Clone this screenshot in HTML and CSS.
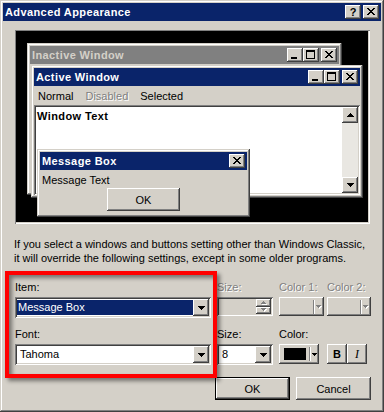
FILE: index.html
```html
<!DOCTYPE html>
<html lang="en">
<head>
  <meta charset="UTF-8" />
  <title>Advanced Appearance</title>
  <link rel="stylesheet" href="styles.css">
</head>
<body>
  <div class="dialog">
    <div class="caption">
      <span class="caption-title">Advanced Appearance</span>
      <div class="caption-btns">
        <span class="cap-btn cap-help">?</span>
        <span class="cap-btn">
          <svg width="16" height="14" shape-rendering="crispEdges"><path transform="translate(4 3)" d="M0 0h2v1h-2zM6 0h2v1h-2zM1 1h2v1h-2zM5 1h2v1h-2zM2 2h4v1h-4zM3 3h2v1h-2zM2 4h4v1h-4zM1 5h2v1h-2zM5 5h2v1h-2zM0 6h2v1h-2zM6 6h2v1h-2z"/></svg>
        </span>
      </div>
    </div>

    <div class="dlg-body">
      <!-- preview canvas: the sample windows overlap each other -->
      <div class="preview">
        <div class="win win-inactive">
          <div class="win-caption inactive">
            <span class="win-title">Inactive Window</span>
            <div class="mini-btns">
              <span class="cap-btn"><svg width="16" height="14" shape-rendering="crispEdges"><path d="M4 9h6v2h-6z"/></svg></span>
              <span class="cap-btn"><svg width="16" height="14" shape-rendering="crispEdges"><path fill-rule="evenodd" d="M3 2h9v9h-9zM4 4v6h7v-6z"/></svg></span>
              <span class="cap-btn cap-close"><svg width="16" height="14" shape-rendering="crispEdges"><path transform="translate(4 3)" d="M0 0h2v1h-2zM6 0h2v1h-2zM1 1h2v1h-2zM5 1h2v1h-2zM2 2h4v1h-4zM3 3h2v1h-2zM2 4h4v1h-4zM1 5h2v1h-2zM5 5h2v1h-2zM0 6h2v1h-2zM6 6h2v1h-2z"/></svg></span>
            </div>
          </div>
        </div>

        <div class="win win-active">
          <div class="win-caption">
            <span class="win-title">Active Window</span>
            <div class="mini-btns">
              <span class="cap-btn"><svg width="16" height="14" shape-rendering="crispEdges"><path d="M4 9h6v2h-6z"/></svg></span>
              <span class="cap-btn"><svg width="16" height="14" shape-rendering="crispEdges"><path fill-rule="evenodd" d="M3 2h9v9h-9zM4 4v6h7v-6z"/></svg></span>
              <span class="cap-btn cap-close"><svg width="16" height="14" shape-rendering="crispEdges"><path transform="translate(4 3)" d="M0 0h2v1h-2zM6 0h2v1h-2zM1 1h2v1h-2zM5 1h2v1h-2zM2 2h4v1h-4zM3 3h2v1h-2zM2 4h4v1h-4zM1 5h2v1h-2zM5 5h2v1h-2zM0 6h2v1h-2zM6 6h2v1h-2z"/></svg></span>
            </div>
          </div>
          <div class="menubar">
            <span>Normal</span>
            <span class="disabled">Disabled</span>
            <span>Selected</span>
          </div>
          <div class="win-text">
            <div class="win-text-body">Window Text</div>
            <div class="scroll">
              <span class="scroll-btn btn"><svg width="7" height="4" shape-rendering="crispEdges"><path d="M3 0h1v1h1v1h1v1h1v1h-7v-1h1v-1h1v-1h1z"/></svg></span>
              <span class="scroll-btn btn"><svg width="7" height="4" shape-rendering="crispEdges"><path d="M0 0h7v1h-1v1h-1v1h-1v1h-1v-1h-1v-1h-1v-1h-1z"/></svg></span>
            </div>
          </div>
        </div>

        <div class="win win-msg">
          <div class="win-caption">
            <span class="win-title">Message Box</span>
            <div class="mini-btns">
              <span class="cap-btn"><svg width="16" height="14" shape-rendering="crispEdges"><path transform="translate(4 3)" d="M0 0h2v1h-2zM6 0h2v1h-2zM1 1h2v1h-2zM5 1h2v1h-2zM2 2h4v1h-4zM3 3h2v1h-2zM2 4h4v1h-4zM1 5h2v1h-2zM5 5h2v1h-2zM0 6h2v1h-2zM6 6h2v1h-2z"/></svg></span>
            </div>
          </div>
          <div class="msg-body">
            <span class="msg-text">Message Text</span>
            <span class="btn msg-ok">OK</span>
          </div>
        </div>
      </div>

      <p class="note">If you select a windows and buttons setting other than Windows Classic,<br>it will override the following settings, except in some older programs.</p>

      <div class="settings">
        <div class="field">
          <label>Item:</label>
          <div class="combo combo-wide">
            <span class="combo-text sel">Message Box</span>
            <span class="combo-btn btn"><svg width="7" height="4" shape-rendering="crispEdges"><path d="M0 0h7v1h-1v1h-1v1h-1v1h-1v-1h-1v-1h-1v-1h-1z"/></svg></span>
          </div>
        </div>
        <div class="field disabled">
          <label>Size:</label>
          <div class="spin">
            <span class="spin-field"></span>
            <span class="spin-btns">
              <span class="btn"><svg width="6" height="4" shape-rendering="crispEdges"><path fill="#fff" transform="translate(1 1)" d="M2 0h1v1h1v1h1v1h-5v-1h1v-1h1z"/><path fill="#808080" d="M2 0h1v1h1v1h1v1h-5v-1h1v-1h1z"/></svg></span>
              <span class="btn"><svg width="6" height="4" shape-rendering="crispEdges"><path fill="#fff" transform="translate(1 1)" d="M0 0h5v1h-1v1h-1v1h-1v-1h-1v-1h-1z"/><path fill="#808080" d="M0 0h5v1h-1v1h-1v1h-1v-1h-1v-1h-1z"/></svg></span>
            </span>
          </div>
        </div>
        <div class="field disabled">
          <label>Color 1:</label>
          <div class="picker btn picker-c1">
            <span class="swatch"></span>
            <span class="sep"></span>
            <svg width="6" height="4" shape-rendering="crispEdges"><path fill="#fff" transform="translate(1 1)" d="M0 0h5v1h-1v1h-1v1h-1v-1h-1v-1h-1z"/><path fill="#808080" d="M0 0h5v1h-1v1h-1v1h-1v-1h-1v-1h-1z"/></svg>
          </div>
        </div>
        <div class="field disabled">
          <label>Color 2:</label>
          <div class="picker btn picker-c2">
            <span class="swatch"></span>
            <span class="sep"></span>
            <svg width="6" height="4" shape-rendering="crispEdges"><path fill="#fff" transform="translate(1 1)" d="M0 0h5v1h-1v1h-1v1h-1v-1h-1v-1h-1z"/><path fill="#808080" d="M0 0h5v1h-1v1h-1v1h-1v-1h-1v-1h-1z"/></svg>
          </div>
        </div>

        <div class="field">
          <label>Font:</label>
          <div class="combo combo-wide">
            <span class="combo-text">Tahoma</span>
            <span class="combo-btn btn"><svg width="7" height="4" shape-rendering="crispEdges"><path d="M0 0h7v1h-1v1h-1v1h-1v1h-1v-1h-1v-1h-1v-1h-1z"/></svg></span>
          </div>
        </div>
        <div class="field">
          <label>Size:</label>
          <div class="combo combo-size">
            <span class="combo-text">8</span>
            <span class="combo-btn btn"><svg width="7" height="4" shape-rendering="crispEdges"><path d="M0 0h7v1h-1v1h-1v1h-1v1h-1v-1h-1v-1h-1v-1h-1z"/></svg></span>
          </div>
        </div>
        <div class="field">
          <label>Color:</label>
          <div class="picker btn">
            <span class="swatch black"></span>
            <span class="sep"></span>
            <svg width="5" height="3" shape-rendering="crispEdges"><path d="M0 0h5v1h-1v1h-1v1h-1v-1h-1v-1h-1z"/></svg>
          </div>
        </div>
        <div class="field">
          <label>&nbsp;</label>
          <div class="style-btns">
            <span class="btn style-btn bold">B</span>
            <span class="btn style-btn italic">I</span>
          </div>
        </div>
      </div>

      <div class="actions">
        <span class="btn btn-default">OK</span>
        <span class="btn">Cancel</span>
      </div>
    </div>

    <div class="highlight"></div>
  </div>
</body>
</html>
```

FILE: styles.css
```css
* {
    margin: 0;
    padding: 0;
    box-sizing: border-box;
}
body {
    width: 384px;
    height: 412px;
    background: #d4d0c8;
    font-family: "Liberation Sans", Arial, sans-serif;
    font-size: 11px;
    color: #000;
}

/* ---- window frame ---- */
.dialog {
    position: relative;
    display: flex;
    flex-direction: column;
    width: 384px;
    height: 412px;
    padding: 3px;
    background: #d4d0c8;
    box-shadow: inset -1px -1px #404040, inset 1px 1px #d4d0c8, inset -2px -2px #808080, inset 2px 2px #fff;
}
.caption {
    display: flex;
    align-items: center;
    justify-content: space-between;
    height: 18px;
    padding: 0 2px;
    background: #0a246a;
    color: #fff;
    font-weight: bold;
    letter-spacing: 0.4px;
}
.caption-btns,
.mini-btns {
    display: flex;
    gap: 2px;
}
.mini-btns { gap: 0; }
.mini-btns .cap-close { margin-left: 2px; }
.cap-btn {
    display: flex;
    align-items: center;
    justify-content: center;
    width: 16px;
    height: 14px;
    background: #d4d0c8;
    color: #000;
    letter-spacing: 0;
    box-shadow: inset -1px -1px #404040, inset 1px 1px #fff, inset -2px -2px #808080, inset 2px 2px #d4d0c8;
}
.cap-help {
    font-size: 11px;
    font-weight: bold;
    line-height: 14px;
}

/* generic raised / sunken */
.btn {
    display: flex;
    align-items: center;
    justify-content: center;
    background: #d4d0c8;
    box-shadow: inset -1px -1px #404040, inset 1px 1px #fff, inset -2px -2px #808080, inset 2px 2px #d4d0c8;
}

.dlg-body {
    flex: 1;
    display: flex;
    flex-direction: column;
    padding: 9px 10px 0 12px;
}

/* ---- preview ---- */
.preview {
    position: relative;
    width: 355px;
    height: 194px;
    background: #000;
    box-shadow: inset 1px 1px #808080, inset -1px -1px #fff, inset -2px -2px #d4d0c8;
}
.win {
    position: absolute;
    display: flex;
    flex-direction: column;
    padding: 3px;
    background: #d4d0c8;
    box-shadow: inset -1px -1px #404040, inset 1px 1px #d4d0c8, inset -2px -2px #808080, inset 2px 2px #fff;
}
.win-inactive { left: 12px; top: 13px; width: 315px; height: 152px; }
.win-active { left: 16px; top: 35px; width: 332px; height: 133px; }
.win-msg { left: 22px; top: 119px; width: 213px; height: 68px; }

.win-caption {
    display: flex;
    align-items: center;
    height: 18px;
    padding: 0 2px;
    background: #0a246a;
    color: #fff;
    font-weight: bold;
    letter-spacing: 0.4px;
}
.win-caption.inactive {
    background: #808080;
    color: #d4d0c8;
}
.win-title { flex: 1; }

.menubar {
    display: flex;
    align-items: center;
    gap: 12px;
    height: 19px;
    padding-left: 4px;
}
.disabled,
.field.disabled label {
    color: #808080;
    text-shadow: 1px 1px #fff;
}

.win-text {
    flex: 1;
    display: flex;
    padding: 2px;
    background: #fff;
    box-shadow: inset 1px 1px #808080, inset -1px -1px #fff, inset 2px 2px #404040, inset -2px -2px #d4d0c8;
}
.win-text-body {
    flex: 1;
    padding: 3px 1px;
    font-weight: bold;
    letter-spacing: 0.4px;
    line-height: 13px;
}
.scroll {
    display: flex;
    flex-direction: column;
    justify-content: space-between;
    width: 16px;
    background: #e9e7e2;
}
.scroll-btn { height: 16px; }

.msg-body {
    display: flex;
    flex-direction: column;
    padding: 4px 2px 0;
}
.msg-text { line-height: 13px; }
.msg-ok {
    align-self: center;
    width: 73px;
    height: 23px;
    margin-top: 1px;
}

/* ---- note ---- */
.note {
    margin: 13px 0 0 -1px;
    line-height: 14px;
    white-space: nowrap;
}

/* ---- settings ---- */
.settings {
    display: grid;
    grid-template-columns: 202px 62px 48px 1fr;
    row-gap: 10px;
    margin-top: 16px;
}
.field {
    display: flex;
    flex-direction: column;
    align-items: flex-start;
    gap: 3px;
}
.field label { line-height: 13px; }

.combo {
    display: flex;
    height: 21px;
    padding: 2px;
    background: #fff;
    box-shadow: inset 1px 1px #808080, inset -1px -1px #fff, inset 2px 2px #404040, inset -2px -2px #d4d0c8;
}
.combo-wide { width: 196px; }
.combo-size { width: 56px; }
.combo-text {
    flex: 1;
    padding-left: 3px;
    line-height: 17px;
}
.combo-text.sel {
    margin: 1px 0;
    padding-left: 1px;
    line-height: 15px;
    background: #0a246a;
    color: #fff;
}
.combo-btn {
    width: 16px;
    height: 17px;
}

.spin {
    display: flex;
    width: 56px;
    height: 19px;
    padding: 2px;
    background: #d4d0c8;
    box-shadow: inset 1px 1px #808080, inset -1px -1px #fff, inset 2px 2px #404040, inset -2px -2px #d4d0c8;
}
.spin-field { flex: 1; }
.spin-btns {
    display: flex;
    flex-direction: column;
    width: 15px;
}
.spin-btns .btn { flex: 1; }

.picker {
    justify-content: flex-start;
    width: 40px;
    height: 20px;
    padding: 3px 2px 3px 5px;
}
.picker-c1 { width: 45px; height: 19px; }
.picker-c2 { width: 44px; height: 19px; }
.swatch {
    flex: 1;
    height: 12px;
    margin-right: 3px;
}
.swatch.black { background: #000; }
.sep {
    width: 2px;
    height: 14px;
    margin-right: 1px;
    border-left: 1px solid #808080;
    border-right: 1px solid #fff;
}

.style-btns { display: flex; }
.style-btn {
    width: 20px;
    height: 20px;
}
.style-btn.bold { font-weight: bold; }
.style-btn.italic {
    font-family: "Liberation Serif", serif;
    font-style: italic;
    font-size: 12px;
}

/* ---- buttons ---- */
.actions {
    display: flex;
    justify-content: flex-end;
    gap: 6px;
    margin-top: 12px;
}
.actions .btn {
    width: 75px;
    height: 23px;
}
.btn-default {
    box-shadow: inset 0 0 0 1px #000, inset -2px -2px #404040, inset 2px 2px #fff, inset -3px -3px #808080;
}

/* red annotation frame drawn over the screenshot */
.highlight {
    position: absolute;
    left: 5px;
    top: 271px;
    width: 212px;
    height: 107px;
    border: 4px solid #f00;
    box-shadow: 3px 3px 4px rgba(0, 0, 0, 0.45), inset 3px 3px 4px rgba(0, 0, 0, 0.45);
    pointer-events: none;
}
```
